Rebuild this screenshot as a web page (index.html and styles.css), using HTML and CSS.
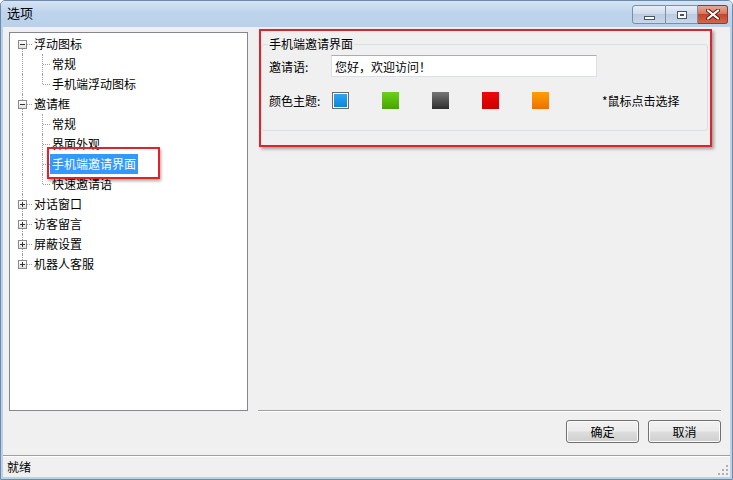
FILE: index.html
```html
<!DOCTYPE html>
<html lang="zh-CN">
<head>
    <meta charset="UTF-8">
    <title>选项</title>
    <link rel="stylesheet" href="styles.css">
</head>
<body>
    <div class="window">
        <div class="titlebar">
            <span class="title">选项</span>
            <div class="controls">
                <span class="ctl min"><i></i></span>
                <span class="ctl max"><i></i></span>
                <span class="ctl close">
                    <svg width="14" height="11" viewBox="0 0 14 11">
                        <path d="M2 1.5 L12 9.5 M12 1.5 L2 9.5" stroke="#5a1b10" stroke-width="4" stroke-linecap="round"/>
                        <path d="M2 1.5 L12 9.5 M12 1.5 L2 9.5" stroke="#fff" stroke-width="2.2" stroke-linecap="round"/>
                    </svg>
                </span>
            </div>
        </div>
        <div class="client">
            <div class="main">
                <div class="tree">
                    <div class="node"><span class="g root first"><b class="exp"></b></span><span class="txt">浮动图标</span></div>
                    <div class="node"><span class="g v"></span><span class="g tee"></span><span class="txt">常规</span></div>
                    <div class="node"><span class="g v"></span><span class="g ell"></span><span class="txt">手机端浮动图标</span></div>
                    <div class="node"><span class="g root"><b class="exp"></b></span><span class="txt">邀请框</span></div>
                    <div class="node"><span class="g v"></span><span class="g tee"></span><span class="txt">常规</span></div>
                    <div class="node"><span class="g v"></span><span class="g tee"></span><span class="txt">界面外观</span></div>
                    <div class="node"><span class="g v"></span><span class="g tee"></span><span class="txt selected">手机端邀请界面</span></div>
                    <div class="node"><span class="g v"></span><span class="g ell"></span><span class="txt">快速邀请语</span></div>
                    <div class="node"><span class="g root"><b class="exp plus"></b></span><span class="txt">对话窗口</span></div>
                    <div class="node"><span class="g root"><b class="exp plus"></b></span><span class="txt">访客留言</span></div>
                    <div class="node"><span class="g root"><b class="exp plus"></b></span><span class="txt">屏蔽设置</span></div>
                    <div class="node"><span class="g root last"><b class="exp plus"></b></span><span class="txt">机器人客服</span></div>
                </div>
                <div class="pane">
                    <fieldset class="group">
                        <legend>手机端邀请界面</legend>
                        <div class="field">
                            <label>邀请语:</label>
                            <input type="text" value="您好，欢迎访问！">
                        </div>
                        <div class="field colors">
                            <label>颜色主题:</label>
                            <div class="swatches">
                                <span class="swatch blue active"></span>
                                <span class="swatch green"></span>
                                <span class="swatch gray"></span>
                                <span class="swatch red"></span>
                                <span class="swatch orange"></span>
                            </div>
                            <span class="hint">*鼠标点击选择</span>
                        </div>
                    </fieldset>
                    <div class="sep"></div>
                    <div class="buttons">
                        <button type="button">确定</button>
                        <button type="button">取消</button>
                    </div>
                </div>
            </div>
            <div class="status">
                <span>就绪</span>
                <svg class="grip" width="10" height="10" viewBox="0 0 10 10">
                    <rect x="8" y="0" width="2" height="2" fill="#b0b0b0"/>
                    <rect x="4" y="4" width="2" height="2" fill="#b0b0b0"/>
                    <rect x="8" y="4" width="2" height="2" fill="#b0b0b0"/>
                    <rect x="0" y="8" width="2" height="2" fill="#b0b0b0"/>
                    <rect x="4" y="8" width="2" height="2" fill="#b0b0b0"/>
                    <rect x="8" y="8" width="2" height="2" fill="#b0b0b0"/>
                </svg>
            </div>
        </div>
    </div>
</body>
</html>
```

FILE: styles.css
```css
* {
    box-sizing: border-box;
}

body {
    margin: 0;
    background: #fff;
    font-family: "Noto Sans CJK SC", "Microsoft YaHei", sans-serif;
    font-size: 12px;
    color: #000;
}

.window {
    width: 733px;
    height: 480px;
    display: flex;
    flex-direction: column;
    background: #b9d1ea;
    border: 1px solid #6f8aa8;
    border-radius: 5px 5px 0 0;
    overflow: hidden;
}

.titlebar {
    height: 25px;
    flex: none;
    display: flex;
    align-items: flex-start;
    justify-content: space-between;
    background: linear-gradient(to bottom, #d6e4f4, #bfd4ed 45%, #b9d1ea);
}

.title {
    margin: 3px 0 0 6px;
    line-height: 18px;
    font-size: 13px;
}

.controls {
    display: flex;
    margin: 4px 4px 0 0;
}

.ctl {
    height: 19px;
    display: flex;
    align-items: center;
    justify-content: center;
    border: 1px solid #7a8fa9;
    background: linear-gradient(to bottom, #e6eef8, #d0dcec 45%, #bccbe0 50%, #c9d7ea);
}

.min {
    width: 34px;
    border-radius: 3px 0 0 3px;
}

.min i {
    width: 11px;
    height: 4px;
    margin-top: 6px;
    background: #fff;
    border: 1px solid #44546a;
}

.max {
    width: 32px;
    border-left: none;
}

.max i {
    width: 10px;
    height: 8px;
    border: 1px solid #44546a;
    box-shadow: inset 0 0 0 2px #fff;
    background: #44546a;
    background-clip: content-box;
}

.close {
    width: 30px;
    border-left: none;
    border-color: #8d3c2d;
    border-radius: 0 3px 3px 0;
    background: linear-gradient(to bottom, #e9a898, #d7765f 45%, #c2462c 50%, #d4664c);
}

.client {
    flex: 1;
    display: flex;
    flex-direction: column;
    margin: 1px 2px 2px 2px;
    background: #f0f0f0;
}

.main {
    flex: 1;
    display: flex;
    gap: 10px;
    padding: 5px 9px 12px 6px;
}

/* tree */

.tree {
    width: 239px;
    height: 379px;
    flex: none;
    background: #fff;
    border: 1px solid #828790;
    padding: 1px 0 0 2px;
}

.node {
    height: 20px;
    display: flex;
    align-items: center;
}

.g {
    width: 20px;
    height: 20px;
    flex: none;
    position: relative;
}

.g.tee,
.g.ell {
    width: 18px;
}

.g::before,
.g::after {
    content: "";
    position: absolute;
}

.g.v::before,
.g.tee::before,
.g.root::before {
    left: 10px;
    top: 0;
    bottom: 0;
    border-left: 1px dotted #a0a0a0;
}

.g.root.first::before {
    top: 10px;
}

.g.root.last::before {
    bottom: 10px;
}

.g.ell::before {
    left: 10px;
    top: 0;
    height: 10px;
    border-left: 1px dotted #a0a0a0;
}

.g.tee::after,
.g.ell::after,
.g.root::after {
    left: 11px;
    right: 0;
    top: 10px;
    border-top: 1px dotted #a0a0a0;
}

.exp {
    position: absolute;
    left: 6px;
    top: 6px;
    width: 9px;
    height: 9px;
    z-index: 1;
    border: 1px solid #8a8a8a;
    background: linear-gradient(to bottom, #fff, #e0e0e0);
}

.exp::before {
    content: "";
    position: absolute;
    left: 1px;
    top: 3px;
    width: 5px;
    height: 1px;
    background: #333;
}

.exp.plus::after {
    content: "";
    position: absolute;
    left: 3px;
    top: 1px;
    width: 1px;
    height: 5px;
    background: #333;
}

.txt {
    padding: 0 2px;
    line-height: 20px;
    height: 20px;
    white-space: nowrap;
}

.txt.selected {
    position: relative;
    background: #3399ff;
    color: #fff;
}

.txt.selected::after {
    content: "";
    position: absolute;
    left: -3px;
    right: -22px;
    top: -7px;
    bottom: -5px;
    border: 2px solid #e0232a;
    box-shadow: 1px 2px 3px rgba(0, 0, 0, 0.35);
}

/* right pane */

.pane {
    flex: 1;
    display: flex;
    flex-direction: column;
}

.group {
    position: relative;
    margin: 4px 13px 0 3px;
    padding: 0 6px 19px 7px;
    border: 1px solid #d5dfe5;
    border-radius: 3px;
    min-width: 0;
}

.group::after {
    content: "";
    position: absolute;
    left: -3px;
    right: -5px;
    top: -23px;
    bottom: -17px;
    border: 2px solid #d9262d;
    box-shadow: 2px 2px 3px rgba(0, 0, 0, 0.35);
}

.group legend {
    padding: 0 1px;
    margin-left: -1px;
    line-height: 16px;
}

.field {
    display: flex;
    align-items: center;
    margin-top: 3px;
    height: 22px;
}

.field label {
    width: 62px;
    flex: none;
}

.field input {
    width: 266px;
    height: 22px;
    padding: 0 3px;
    border: 1px solid #dbdfe6;
    border-top-color: #abadb3;
    background: #fff;
    font: inherit;
    color: #000;
}

.field.colors {
    margin-top: 12px;
}

.swatches {
    display: flex;
    gap: 33px;
    margin-left: 1px;
}

.swatch {
    width: 17px;
    height: 17px;
}

.swatch.active {
    border: 1px solid #6a6a6a;
    box-shadow: inset 0 0 0 1px #fff;
}

.blue { background: linear-gradient(to bottom, #2fa8f2, #0a82da); }
.green { background: linear-gradient(to bottom, #6cd11a, #45a500); }
.gray { background: linear-gradient(to bottom, #777, #2e2e2e); }
.red { background: linear-gradient(to bottom, #ee0a0a, #cc0000); }
.orange { background: linear-gradient(to bottom, #ffa000, #ee7000); }

.hint {
    margin-left: 53px;
}

.sep {
    margin-top: auto;
    height: 2px;
    border-top: 1px solid #a0a0a0;
    border-bottom: 1px solid #fff;
}

.buttons {
    display: flex;
    justify-content: flex-end;
    gap: 9px;
    margin-top: 8px;
}

.buttons button {
    width: 73px;
    height: 23px;
    border: 1px solid #707070;
    border-radius: 3px;
    background: linear-gradient(to bottom, #f2f2f2, #ebebeb 48%, #dddddd 52%, #cfcfcf);
    box-shadow: inset 0 0 0 1px #fcfcfc;
    font: inherit;
    color: #000;
    padding: 0;
}

/* status bar */

.status {
    height: 22px;
    flex: none;
    display: flex;
    align-items: center;
    justify-content: space-between;
    padding: 0 2px 0 4px;
    border-top: 1px solid #a0a0a0;
    box-shadow: inset 0 1px 0 #fff;
}

.grip {
    align-self: flex-end;
    margin-bottom: 2px;
}
```
